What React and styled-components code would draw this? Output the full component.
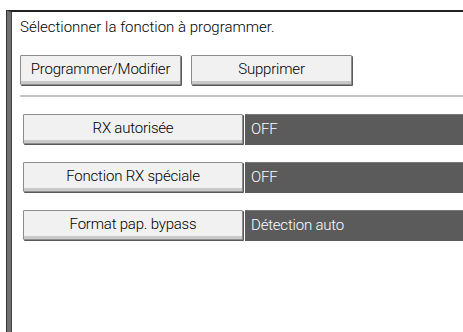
import React from "react";
import styled, { createGlobalStyle } from "styled-components";

const GlobalStyle = createGlobalStyle`
  html, body {
    margin: 0;
    padding: 0;
    background: #ffffff;
  }
  body {
    font-family: Roboto, "DejaVu Sans Condensed", sans-serif;
    font-weight: 300;
    color: #000000;
  }
`;

const Screen = styled.div`
  width: 463px;
  height: 332px;
  overflow: hidden;
  padding: 10px 0 0 6px;
  box-sizing: border-box;
`;

const Frame = styled.div`
  height: 100%;
  border-top: 2px solid #222;
  border-left: 5px solid #707070;
  box-shadow: inset 1px 0 0 #444;
  padding: 5px 0 0 9px;
  box-sizing: border-box;
  position: relative;
  &::before {
    content: "";
    position: absolute;
    left: -5px;
    top: -2px;
    bottom: 0;
    width: 1px;
    background: #333;
  }
`;

const Title = styled.div`
  font-size: 15px;
  line-height: 18px;
  height: 18px;
  padding-top: 1px;
`;

const Toolbar = styled.div`
  display: flex;
  gap: 10px;
  margin-top: 19px;
`;

const Button = styled.button`
  width: ${(p) => p.w}px;
  height: 30px;
  font-family: inherit;
  font-weight: 300;
  font-size: 15px;
  letter-spacing: -0.2px;
  color: #000000;
  background: #f1f1f1;
  border: 1px solid #8c8c8c;
  border-radius: 1px;
  box-shadow: inset 0 -3px 0 #c9c9c9, 1px 1px 0 #5a5a5a;
  padding: 0 0 2px;
  margin: 0;
  display: flex;
  align-items: center;
  justify-content: center;
  box-sizing: border-box;
`;

const Separator = styled.div`
  height: 2px;
  background: #c4c4c4;
  margin-top: 10px;
`;

const List = styled.div`
  display: flex;
  flex-direction: column;
  gap: 17px;
  margin: 17px 0 0 3px;
`;

const Row = styled.div`
  display: flex;
  height: 31px;
`;

const Value = styled.div`
  flex: 1;
  background: #5b5b5b;
  border-top: 1px solid #777;
  margin-left: 2px;
  color: #ffffff;
  font-size: 15px;
  letter-spacing: -0.2px;
  display: flex;
  align-items: center;
  padding-left: 6px;
  padding-bottom: 2px;
`;

const settings = [
  { label: "RX autorisée", value: "OFF" },
  { label: "Fonction RX spéciale", value: "OFF" },
  { label: "Format pap. bypass", value: "Détection auto" },
];

const App = () => {
  return (
    <Screen>
      <GlobalStyle />
      <Frame>
        <Title>Sélectionner la fonction à programmer.</Title>
        <Toolbar>
          <Button w={161}>Programmer/Modifier</Button>
          <Button w={161}>Supprimer</Button>
        </Toolbar>
        <Separator />
        <List>
          {settings.map((item) => (
            <Row key={item.label}>
              <Button w={220}>{item.label}</Button>
              <Value>{item.value}</Value>
            </Row>
          ))}
        </List>
      </Frame>
    </Screen>
  );
};

export default App;
